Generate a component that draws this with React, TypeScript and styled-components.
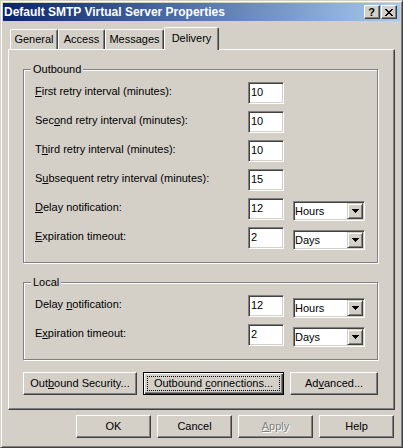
import React from "react";
import styled, { createGlobalStyle, css } from "styled-components";

const GlobalStyle = createGlobalStyle`
  html, body { margin: 0; padding: 0; background: #D4D0C8; }
  body {
    font-family: "Liberation Sans", Arial, sans-serif;
    font-size: 11px;
    color: #000;
  }
  * { box-sizing: border-box; }
`;

const Window = styled.div`
  width: 403px;
  height: 448px;
  background: #d4d0c8;
  border: 1px solid;
  border-color: #d4d0c8 #404040 #404040 #d4d0c8;
  box-shadow: inset 1px 1px #fff, inset -1px -1px #808080;
  padding: 2px;
  display: flex;
  flex-direction: column;
`;

const TitleBar = styled.div`
  height: 18px;
  flex: none;
  display: flex;
  align-items: center;
  justify-content: space-between;
  padding: 0 3px 0 1px;
  background: linear-gradient(to right, #0a246a, #a6caf0);
`;

const TitleText = styled.span`
  color: #fff;
  font-weight: bold;
  font-size: 12px;
  line-height: 14px;
  white-space: nowrap;
`;

const CaptionButtons = styled.div`
  display: flex;
  gap: 1px;
`;

const CaptionButton = styled.div`
  width: 16px;
  height: 14px;
  background: #d4d0c8;
  border: 1px solid;
  border-color: #fff #404040 #404040 #fff;
  box-shadow: inset -1px -1px #808080;
  display: flex;
  align-items: center;
  justify-content: center;
  font-weight: bold;
  font-size: 11px;
  line-height: 11px;
  padding-right: 1px;
`;

const Body = styled.div`
  flex: 1;
  display: flex;
  flex-direction: column;
  padding: 6px 5px 0 5px;
`;

const TabRow = styled.div`
  display: flex;
  align-items: flex-end;
  height: 22px;
  padding-left: 2px;
  position: relative;
  z-index: 1;
`;

const Tab = styled.div<{ $w: number; $active?: boolean }>`
  width: ${(p) => p.$w}px;
  height: 20px;
  background: #d4d0c8;
  border-left: 1px solid #fff;
  border-top: 1px solid #fff;
  border-right: 1px solid #404040;
  border-radius: 2px 2px 0 0;
  box-shadow: inset -1px 0 #808080;
  text-align: center;
  padding-top: 3px;
  line-height: 13px;
  white-space: nowrap;
  ${(p) =>
    p.$active &&
    css`
      height: 23px;
      margin-bottom: -1px;
      padding-top: 4px;
    `}
`;

const Panel = styled.div`
  height: 361px;
  flex: none;
  border: 1px solid;
  border-color: #fff #404040 #404040 #fff;
  box-shadow: inset -1px -1px #808080;
  padding: 19px 0 0 14px;
  display: flex;
  flex-direction: column;
`;

const Groups = styled.div`
  display: flex;
  flex-direction: column;
  gap: 19px;
`;

const Group = styled.div<{ $h: number }>`
  position: relative;
  width: 355px;
  height: ${(p) => p.$h}px;
  border: 1px solid #808080;
  box-shadow: inset 1px 1px #fff, 1px 1px #fff;
  padding: 12px 0 0 11px;
`;

const GroupLabel = styled.span`
  position: absolute;
  top: -7px;
  left: 7px;
  padding: 0 2px;
  background: #d4d0c8;
  line-height: 13px;
`;

const Rows = styled.div`
  display: grid;
  grid-template-columns: 213px 45px 72px;
  grid-auto-rows: 22px;
  row-gap: 7px;
`;

const Label = styled.span`
  grid-column: 1;
  padding-top: 3px;
  line-height: 13px;
  white-space: nowrap;
`;

const Key = styled.u`
  text-decoration: underline;
  text-underline-offset: 1px;
`;

const sunken = css`
  border: 1px solid;
  border-color: #808080 #fff #fff #808080;
  box-shadow: inset 1px 1px #404040, inset -1px -1px #d4d0c8;
`;

const Field = styled.input`
  grid-column: 2;
  width: 36px;
  height: 22px;
  ${sunken}
  background: #fff;
  font: inherit;
  font-size: 11px;
  line-height: 13px;
  color: #000;
  padding: 0 2px 3px 2px;
  margin: 0;
  outline: none;
`;

const Combo = styled.div`
  grid-column: 3;
  width: 72px;
  height: 20px;
  margin-top: 3px;
  ${sunken}
  background: #fff;
  padding: 1px;
  display: flex;
  align-items: center;
  justify-content: space-between;
`;

const ComboText = styled.span`
  line-height: 13px;
`;

const DropButton = styled.div`
  width: 16px;
  height: 16px;
  background: #d4d0c8;
  border: 1px solid;
  border-color: #d4d0c8 #404040 #404040 #d4d0c8;
  box-shadow: inset 1px 1px #fff, inset -1px -1px #808080;
  display: flex;
  align-items: center;
  justify-content: center;
`;

const ButtonRow = styled.div<{ $end?: boolean; $top: number }>`
  display: flex;
  gap: 6px;
  margin-top: ${(p) => p.$top}px;
  ${(p) =>
    p.$end &&
    css`
      justify-content: flex-end;
      padding-right: 1px;
    `}
`;

const Button = styled.div<{ $w: number; $focused?: boolean; $disabled?: boolean }>`
  position: relative;
  width: ${(p) => p.$w}px;
  height: 23px;
  background: #d4d0c8;
  border: 1px solid;
  border-color: #fff #404040 #404040 #fff;
  box-shadow: inset -1px -1px #808080;
  display: flex;
  align-items: center;
  justify-content: center;
  line-height: 13px;
  white-space: nowrap;
  ${(p) =>
    p.$disabled &&
    css`
      color: #808080;
      text-shadow: 1px 1px #fff;
    `}
  ${(p) =>
    p.$focused &&
    css`
      border-color: #000;
      box-shadow: inset 1px 1px #fff, inset -1px -1px #404040,
        inset -2px -2px #808080;
      &::after {
        content: "";
        position: absolute;
        inset: 3px;
        border: 1px dotted #000;
      }
    `}
`;

const ButtonText = styled.span`
  white-space: pre;
`;

const Arrow = () => (
  <svg width="7" height="4" viewBox="0 0 7 4" shapeRendering="crispEdges">
    <path d="M0 0h7v1H0zM1 1h5v1H1zM2 2h3v1H2zM3 3h1v1H3z" fill="#000" />
  </svg>
);

const CloseGlyph = () => {
  const rows = ["XX....XX", ".XX..XX.", "..XXXX..", "...XX...", "..XXXX..", ".XX..XX.", "XX....XX"];
  return (
    <svg width="8" height="7" viewBox="0 0 8 7" shapeRendering="crispEdges">
      {rows.flatMap((r, y) =>
        r.split("").map((c, x) => (c === "X" ? <rect key={`${x}-${y}`} x={x} y={y} width={1} height={1} fill="#000" /> : null))
      )}
    </svg>
  );
};

type RowDef = { label: React.ReactNode; value: string; unit?: string };

const outbound: RowDef[] = [
  { label: <><Key>F</Key>irst retry interval (minutes):</>, value: "10" },
  { label: <>Sec<Key>o</Key>nd retry interval (minutes):</>, value: "10" },
  { label: <>T<Key>h</Key>ird retry interval (minutes):</>, value: "10" },
  { label: <>S<Key>u</Key>bsequent retry interval (minutes):</>, value: "15" },
  { label: <><Key>D</Key>elay notification:</>, value: "12", unit: "Hours" },
  { label: <><Key>E</Key>xpiration timeout:</>, value: "2", unit: "Days" },
];

const local: RowDef[] = [
  { label: <>Delay <Key>n</Key>otification:</>, value: "12", unit: "Hours" },
  { label: <>E<Key>x</Key>piration timeout:</>, value: "2", unit: "Days" },
];

const RowList = ({ rows }: { rows: RowDef[] }) => (
  <Rows>
    {rows.map((r, i) => (
      <React.Fragment key={i}>
        <Label>{r.label}</Label>
        <Field readOnly value={r.value} />
        {r.unit && (
          <Combo>
            <ComboText>{r.unit}</ComboText>
            <DropButton>
              <Arrow />
            </DropButton>
          </Combo>
        )}
      </React.Fragment>
    ))}
  </Rows>
);

export default function App() {
  return (
    <>
      <GlobalStyle />
      <Window>
        <TitleBar>
          <TitleText>Default SMTP Virtual Server Properties</TitleText>
          <CaptionButtons>
            <CaptionButton>?</CaptionButton>
            <CaptionButton>
              <CloseGlyph />
            </CaptionButton>
          </CaptionButtons>
        </TitleBar>
        <Body>
          <TabRow>
            <Tab $w={48}>General</Tab>
            <Tab $w={47}>Access</Tab>
            <Tab $w={59}>Messages</Tab>
            <Tab $w={55} $active>
              Delivery
            </Tab>
          </TabRow>
          <Panel>
            <Groups>
              <Group $h={194}>
                <GroupLabel>Outbound</GroupLabel>
                <RowList rows={outbound} />
              </Group>
              <Group $h={78}>
                <GroupLabel>Local</GroupLabel>
                <RowList rows={local} />
              </Group>
            </Groups>
            <ButtonRow $top={12}>
              <Button $w={114}>
                <ButtonText>
                  Out<Key>b</Key>ound Security...
                </ButtonText>
              </Button>
              <Button $w={141} $focused>
                <ButtonText>
                  Outbound <Key>c</Key>onnections...
                </ButtonText>
              </Button>
              <Button $w={88}>
                <ButtonText>
                  Ad<Key>v</Key>anced...
                </ButtonText>
              </Button>
            </ButtonRow>
          </Panel>
          <ButtonRow $top={5} $end>
            <Button $w={75}>OK</Button>
            <Button $w={75}>Cancel</Button>
            <Button $w={75} $disabled>
              <ButtonText>
                <Key>A</Key>pply
              </ButtonText>
            </Button>
            <Button $w={75}>Help</Button>
          </ButtonRow>
        </Body>
      </Window>
    </>
  );
}
